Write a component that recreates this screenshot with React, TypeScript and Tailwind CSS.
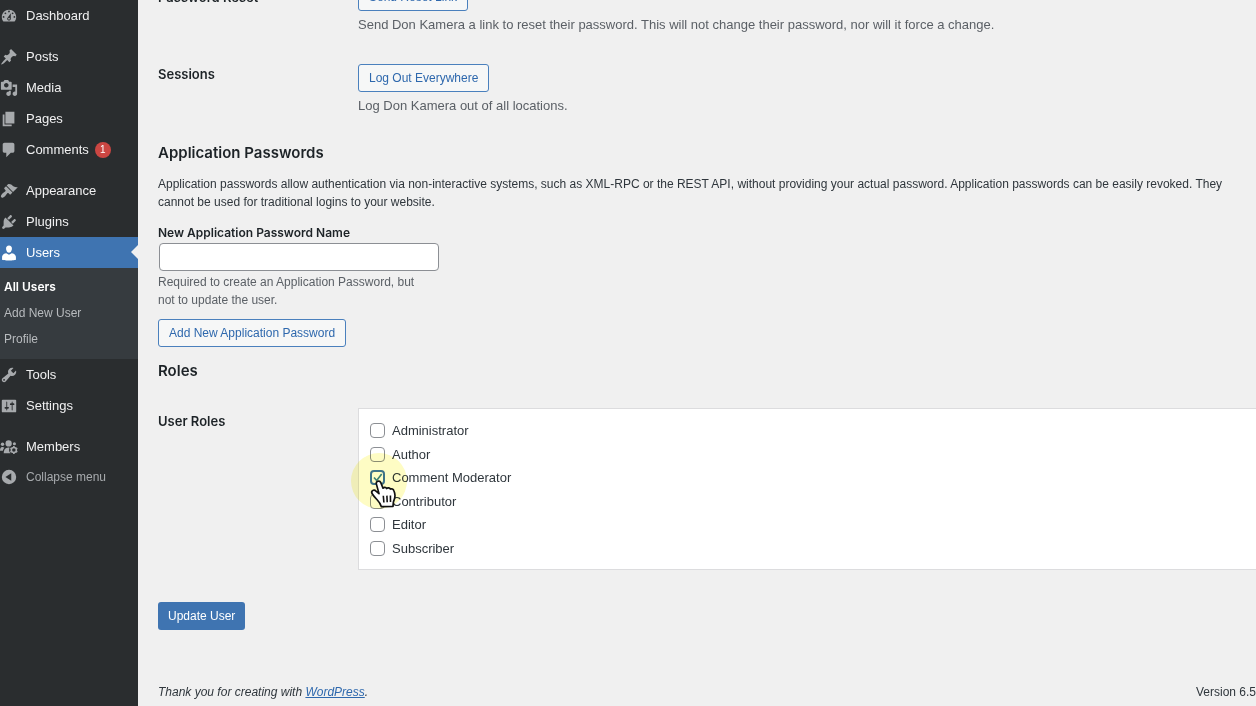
import type { ReactNode } from "react";

const icons = {
  dashboard:
    "M3.76 16h12.48c1.1-1.37 1.76-3.11 1.76-5 0-4.42-3.58-8-8-8s-8 3.58-8 8c0 1.89.66 3.63 1.76 5zM10 4c.55 0 1 .45 1 1s-.45 1-1 1-1-.45-1-1 .45-1 1-1zM6 6c.55 0 1 .45 1 1s-.45 1-1 1-1-.45-1-1 .45-1 1-1zm8 0c.55 0 1 .45 1 1s-.45 1-1 1-1-.45-1-1 .45-1 1-1zm-5.37 5.55L12 7v6c0 1.1-.9 2-2 2s-2-.9-2-2c0-.57.24-1.08.63-1.45zM4 10c.55 0 1 .45 1 1s-.45 1-1 1-1-.45-1-1 .45-1 1-1zm12 0c.55 0 1 .45 1 1s-.45 1-1 1-1-.45-1-1 .45-1 1-1zm-5 3c0-.55-.45-1-1-1s-1 .45-1 1 .45 1 1 1 1-.45 1-1z",
  posts:
    "M10.44 3.02l1.82-1.82 6.36 6.35-1.83 1.82c-1.05-.68-2.48-.57-3.41.36l-.75.75c-.92.93-1.04 2.35-.35 3.41l-1.83 1.82-2.41-2.41-2.8 2.79c-.42.42-3.38 2.71-3.8 2.29s1.86-3.39 2.28-3.81l2.79-2.79L4.1 9.36l1.83-1.82c1.05.69 2.48.57 3.4-.36l.75-.75c.93-.92 1.05-2.35.36-3.41z",
  media:
    "M13 11V4c0-.55-.45-1-1-1h-1.67L9 1H5L3.67 3H2c-.55 0-1 .45-1 1v7c0 .55.45 1 1 1h10c.55 0 1-.45 1-1zM7 4.5c1.38 0 2.5 1.12 2.5 2.5S8.38 9.5 7 9.5 4.5 8.38 4.5 7 5.62 4.5 7 4.5zM14 6h5v10.5c0 1.38-1.12 2.5-2.5 2.5S14 17.88 14 16.5s1.12-2.5 2.5-2.5c.17 0 .34.02.5.05V9h-3V6zm-4 8.05V13h2v3.5c0 1.38-1.12 2.5-2.5 2.5S7 17.88 7 16.5 8.12 14 9.5 14c.17 0 .34.02.5.05z",
  pages: "M6 15V2h10v13H6zm-1 1h8v2H3V5h2v11z",
  comments:
    "M5 2h9c1.1 0 2 .9 2 2v7c0 1.1-.9 2-2 2h-2l-5 5v-5H5c-1.1 0-2-.9-2-2V4c0-1.1.9-2 2-2z",
  appearance:
    "M14.48 11.06L7.41 3.99l1.5-1.5c.5-.56 2.3-.47 3.51.32 1.21.8 1.43 1.28 2.91 2.1 1.18.64 2.45 1.26 4.45.85zm-.71.71L6.7 4.7 4.93 6.47c-.39.39-.39 1.02 0 1.41l1.06 1.06c.39.39.39 1.03 0 1.42-.6.6-1.43 1.11-2.21 1.69-.35.26-.7.53-1.01.84C1.43 14.23.4 16.08 1.4 17.07c.99 1 2.84-.03 4.18-1.36.31-.31.58-.66.85-1.02.57-.78 1.08-1.61 1.69-2.21.39-.39 1.02-.39 1.41 0l1.06 1.06c.39.39 1.02.39 1.41 0z",
  plugins:
    "M13.11 4.36L9.87 7.6 8 5.73l3.24-3.24c.35-.34 1.05-.2 1.56.32.52.51.66 1.21.31 1.55zm-8 1.77l.91-1.12 9.01 9.01-1.19.84c-.71.71-2.63 1.16-3.82 1.16H6.14L4.9 17.26c-.59.59-1.54.59-2.12 0-.59-.58-.59-1.53 0-2.12l1.24-1.24v-3.88c0-1.13.4-3.19 1.09-3.89zm7.26 3.97l3.24-3.24c.34-.35 1.04-.21 1.55.31.52.51.66 1.21.31 1.55l-3.24 3.25z",
  users:
    "M10 9.8c-2.6 0-3.2-3.9-3.2-3.9C6.500 3.600 7.500 1.700 10 1.700s3.500 1.900 3.200 4.200c0 0-.6 3.900-3.200 3.900zM13 10.200c2.500 0 4.700 2.200 4.700 4.500v2.700s-3.800 1-7.700 1-7.700-1-7.700-1v-2.700c0-2.300 2.100-4.500 4.700-4.500L10 12z",
  tools:
    "M16.68 9.77c-1.34 1.34-3.3 1.67-4.95.99l-5.41 6.52c-.99.99-2.59.99-3.58 0s-.99-2.59 0-3.57l6.52-5.42c-.68-1.65-.35-3.61.99-4.95 1.28-1.28 3.12-1.62 4.72-1.06l-2.89 2.89 2.82 2.82 2.86-2.87c.53 1.58.18 3.39-1.08 4.65zM3.81 16.21c.4.39 1.04.39 1.43 0 .4-.4.4-1.04 0-1.43-.39-.4-1.03-.4-1.43 0-.39.39-.39 1.03 0 1.43z",
  settings:
    "M18 16V4c0-.55-.45-1-1-1H3c-.55 0-1 .45-1 1v12c0 .55.45 1 1 1h14c.55 0 1-.45 1-1zM8 11h1c.55 0 1 .45 1 1s-.45 1-1 1H8v1.5c0 .28-.22.5-.5.5s-.5-.22-.5-.5V13H6c-.55 0-1-.45-1-1s.45-1 1-1h1V5.5c0-.28.22-.5.5-.5s.5.22.5.5V11zm5-2h-1c-.55 0-1-.45-1-1s.45-1 1-1h1V5.5c0-.28.22-.5.5-.5s.5.22.5.5V7h1c.55 0 1 .45 1 1s-.45 1-1 1h-1v5.5c0 .28-.22.5-.5.5s-.5-.22-.5-.5V9z",
  collapse: "M10 2a8 8 0 1 0 0 16a8 8 0 1 0 0-16zM12.5 5.8v8.4L6 10z",
};

function Icon({ name }: { name: keyof typeof icons }) {
  return (
    <svg viewBox="0 0 20 20" className="size-[18px] shrink-0" fill="currentColor" fillRule="evenodd" aria-hidden="true">
      <path d={icons[name]} />
    </svg>
  );
}

function MembersIcon() {
  return (
    <svg viewBox="0 0 20 20" className="size-[18px] shrink-0" fill="currentColor" aria-hidden="true">
      <circle cx="2.8" cy="7" r="1.9" />
      <circle cx="9.6" cy="6" r="3.5" />
      <circle cx="16" cy="6.4" r="1.7" />
      <path d="M0 14.200c0-2.400.8-4.200 2.600-4.200 1 0 1.700.3 2.300.9-1 .9-1.600 2.200-1.700 3.300H0z" />
      <path d="M4.100 17c0-4 1.800-6.400 5-6.500.6 0 1.100.1 1.500.3-.9 2-.6 4.500 1 6.200H4.100z" />
      <circle cx="15.400" cy="13.400" r="2.800" fill="none" stroke="currentColor" strokeWidth="1.700" />
      <path
        d="M15.400 9v1.600M15.400 16.200v1.600M11.600 11.200l1.400.8M17.800 14.800l1.400.8M19.200 11.200l-1.400.8M13 14.800l-1.400.8"
        stroke="currentColor"
        strokeWidth="1.800"
      />
    </svg>
  );
}

function MenuItem({ icon, label, children }: { icon: ReactNode; label: string; children?: ReactNode }) {
  return (
    <li>
      <a href="#" className="flex h-[31px] items-center gap-2 text-[#f0f0f1]">
        <span className="text-[#a7aaad]">{icon}</span>
        <span>{label}</span>
        {children}
      </a>
    </li>
  );
}

function Sidebar() {
  return (
    <nav aria-label="Main menu" className="w-[138px] shrink-0 bg-[#2a2d2f] text-[13px]">
      <ul>
        <MenuItem icon={<Icon name="dashboard" />} label="Dashboard" />
      </ul>
      <ul className="mt-2.5">
        <MenuItem icon={<Icon name="posts" />} label="Posts" />
        <MenuItem icon={<Icon name="media" />} label="Media" />
        <MenuItem icon={<Icon name="pages" />} label="Pages" />
        <MenuItem icon={<Icon name="comments" />} label="Comments">
          <span className="-ml-0.5 flex size-4 items-center justify-center rounded-full bg-[#cb4642] text-[10px] text-white">
            1
          </span>
        </MenuItem>
      </ul>
      <ul className="mt-2.5">
        <MenuItem icon={<Icon name="appearance" />} label="Appearance" />
        <MenuItem icon={<Icon name="plugins" />} label="Plugins" />
        <li>
          <a href="#" className="relative flex h-[31px] items-center gap-2 bg-[#3f74b1] text-white">
            <Icon name="users" />
            <span>Users</span>
            <svg viewBox="0 0 7 14" className="absolute top-2 right-0 h-3.5 w-[7px]" fill="#f0f0f0" aria-hidden="true">
              <path d="M7 0v14L0 7z" />
            </svg>
          </a>
          <ul className="bg-[#363b3f] pt-1.5 pb-[7px] pl-1 text-[12px] leading-[26px] text-[#b8bbbe]">
            <li><a href="#" className="font-['Inter',sans-serif] font-semibold text-white">All Users</a></li>
            <li><a href="#">Add New User</a></li>
            <li><a href="#">Profile</a></li>
          </ul>
        </li>
        <MenuItem icon={<Icon name="tools" />} label="Tools" />
        <MenuItem icon={<Icon name="settings" />} label="Settings" />
      </ul>
      <ul className="mt-2.5">
        <MenuItem icon={<MembersIcon />} label="Members" />
        <li>
          <button type="button" className="flex h-[29px] items-center gap-2 text-[12px] text-[#a7aaad]">
            <Icon name="collapse" />
            Collapse menu
          </button>
        </li>
      </ul>
    </nav>
  );
}

function OutlineButton({ children }: { children: ReactNode }) {
  return (
    <button
      type="button"
      className="block h-7 rounded-[3px] border border-[#4a80bd] bg-[#f6f7f7] px-2.5 text-[12px] text-[#2e68ad]"
    >
      {children}
    </button>
  );
}

function RoleOption({ label, checked = false }: { label: string; checked?: boolean }) {
  return (
    <label className="flex items-center gap-[7px]">
      <span className="relative flex size-[15px]">
        <input
          type="checkbox"
          defaultChecked={checked}
          className="peer size-[15px] appearance-none rounded-[4px] border border-[#8c8f94] bg-white checked:border-2 checked:border-[#3f74b1]"
        />
        <svg
          viewBox="0 0 15 15"
          className="pointer-events-none absolute inset-0 hidden size-[15px] peer-checked:block"
          fill="none"
          stroke="#3f8293"
          strokeWidth="1.7"
          aria-hidden="true"
        >
          <path d="M4 7.500l2.700 3L11.700 4" />
        </svg>
      </span>
      {label}
    </label>
  );
}

function Pointer() {
  return (
    <div className="pointer-events-none absolute top-11 -left-2 size-14" aria-hidden="true">
      <div className="size-14 rounded-full bg-[#fdfa9c] opacity-60 mix-blend-multiply" />
      <svg
        viewBox="0 0 28 32"
        className="absolute top-[25px] left-[18px] h-8 w-7"
        fill="#fff"
        stroke="#111"
        strokeWidth="1.7"
        strokeLinejoin="round"
      >
        <path d="M9 3.200c1.300-.4 2.300.2 2.800 1.400l2.200 5.600c.8-1.200 3-1.200 3.700.3.900-1.100 3-.9 3.600.5 1.400-.6 3 .1 3.500 1.500.7 1.600 1.100 3.200 1.200 5 .1 2.400-.9 4.500-1.600 6.500l-.4 4.300-11.600.4c-.9-3-2.600-5.200-4.500-7.200-1.700-1.800-3.400-3.500-4.700-5.700-.7-1.200-.6-2.500.4-3.200 1.200-.8 2.700-.3 3.700.7l2.700 2.300L7.400 6.100C6.900 4.700 7.600 3.600 9 3.200z" />
        <path d="M14.300 17.800l.6 6.700M17.900 17.600l.3 6.700M21.400 17.400l.1 6.700" strokeWidth="1.600" />
      </svg>
    </div>
  );
}

function FieldTitle({ children }: { children: ReactNode }) {
  return <h3 className="font-['Inter',sans-serif] text-[13px] leading-5 font-semibold text-[#1d2327]">{children}</h3>;
}

function SectionTitle({ children }: { children: ReactNode }) {
  return <h2 className="font-['Inter',sans-serif] text-[15px] leading-5 font-semibold text-[#1d2327]">{children}</h2>;
}

export default function App() {
  return (
    <div className="flex h-screen overflow-hidden bg-[#f0f0f0] font-['Liberation_Sans',Arial,sans-serif] text-[12px] text-[#2f363c]">
      <Sidebar />
      <main className="flex min-w-0 flex-1 flex-col pl-5">
        <form className="flex-1">
          <div className="-mt-[17px] grid grid-cols-[200px_1fr]">
            <div className="pt-1">
              <FieldTitle>Password Reset</FieldTitle>
            </div>
            <div>
              <OutlineButton>Send Reset Link</OutlineButton>
              <p className="mt-[5px] text-[13px] leading-[18px] text-[#5b6066]">
                Send Don Kamera a link to reset their password. This will not change their password, nor will it force a change.
              </p>
            </div>
          </div>
          <div className="mt-[30px] grid grid-cols-[200px_1fr]">
            <FieldTitle>Sessions</FieldTitle>
            <div>
              <OutlineButton>Log Out Everywhere</OutlineButton>
              <p className="mt-[5px] text-[13px] leading-[18px] text-[#5b6066]">Log Don Kamera out of all locations.</p>
            </div>
          </div>

          <div className="mt-7">
            <SectionTitle>Application Passwords</SectionTitle>
          </div>
          <p className="mt-3 leading-[18px]">
            Application passwords allow authentication via non-interactive systems, such as XML-RPC or the REST API, without
            providing your actual password. Application passwords can be easily revoked. They cannot be used for traditional
            logins to your website.
          </p>
          <label
            htmlFor="app-password"
            className="mt-[13px] block font-['Inter',sans-serif] leading-[18px] font-semibold text-[#1d2327]"
          >
            New Application Password Name
          </label>
          <input
            id="app-password"
            type="text"
            className="mt-px ml-px block h-7 w-[280px] rounded-[4px] border border-[#8c8f94] bg-white px-2"
          />
          <p className="mt-0.5 w-[270px] leading-[18px] text-[#5b6066]">
            Required to create an Application Password, but not to update the user.
          </p>
          <div className="mt-2.5">
            <OutlineButton>Add New Application Password</OutlineButton>
          </div>

          <div className="mt-3.5">
            <SectionTitle>Roles</SectionTitle>
          </div>
          <div className="mt-[27px] grid grid-cols-[200px_1fr]">
            <div className="pt-[3px]">
              <FieldTitle>User Roles</FieldTitle>
            </div>
            <fieldset className="relative border border-r-0 border-[#dcdcde] bg-white pt-2.5 pb-[9px] pl-[11px] text-[13px]">
              <div className="grid h-[141px] grid-rows-6">
                <RoleOption label="Administrator" />
                <RoleOption label="Author" />
                <RoleOption label="Comment Moderator" checked />
                <RoleOption label="Contributor" />
                <RoleOption label="Editor" />
                <RoleOption label="Subscriber" />
              </div>
              <Pointer />
            </fieldset>
          </div>

          <button type="submit" className="mt-8 h-7 rounded-[3px] bg-[#3f74b1] px-2.5 text-[12px] text-white">
            Update User
          </button>
        </form>
        <footer className="flex justify-between pb-1 leading-5">
          <p className="italic">
            Thank you for creating with <a href="#" className="text-[#2e68ad] underline">WordPress</a>.
          </p>
          <p>Version 6.5</p>
        </footer>
      </main>
    </div>
  );
}
